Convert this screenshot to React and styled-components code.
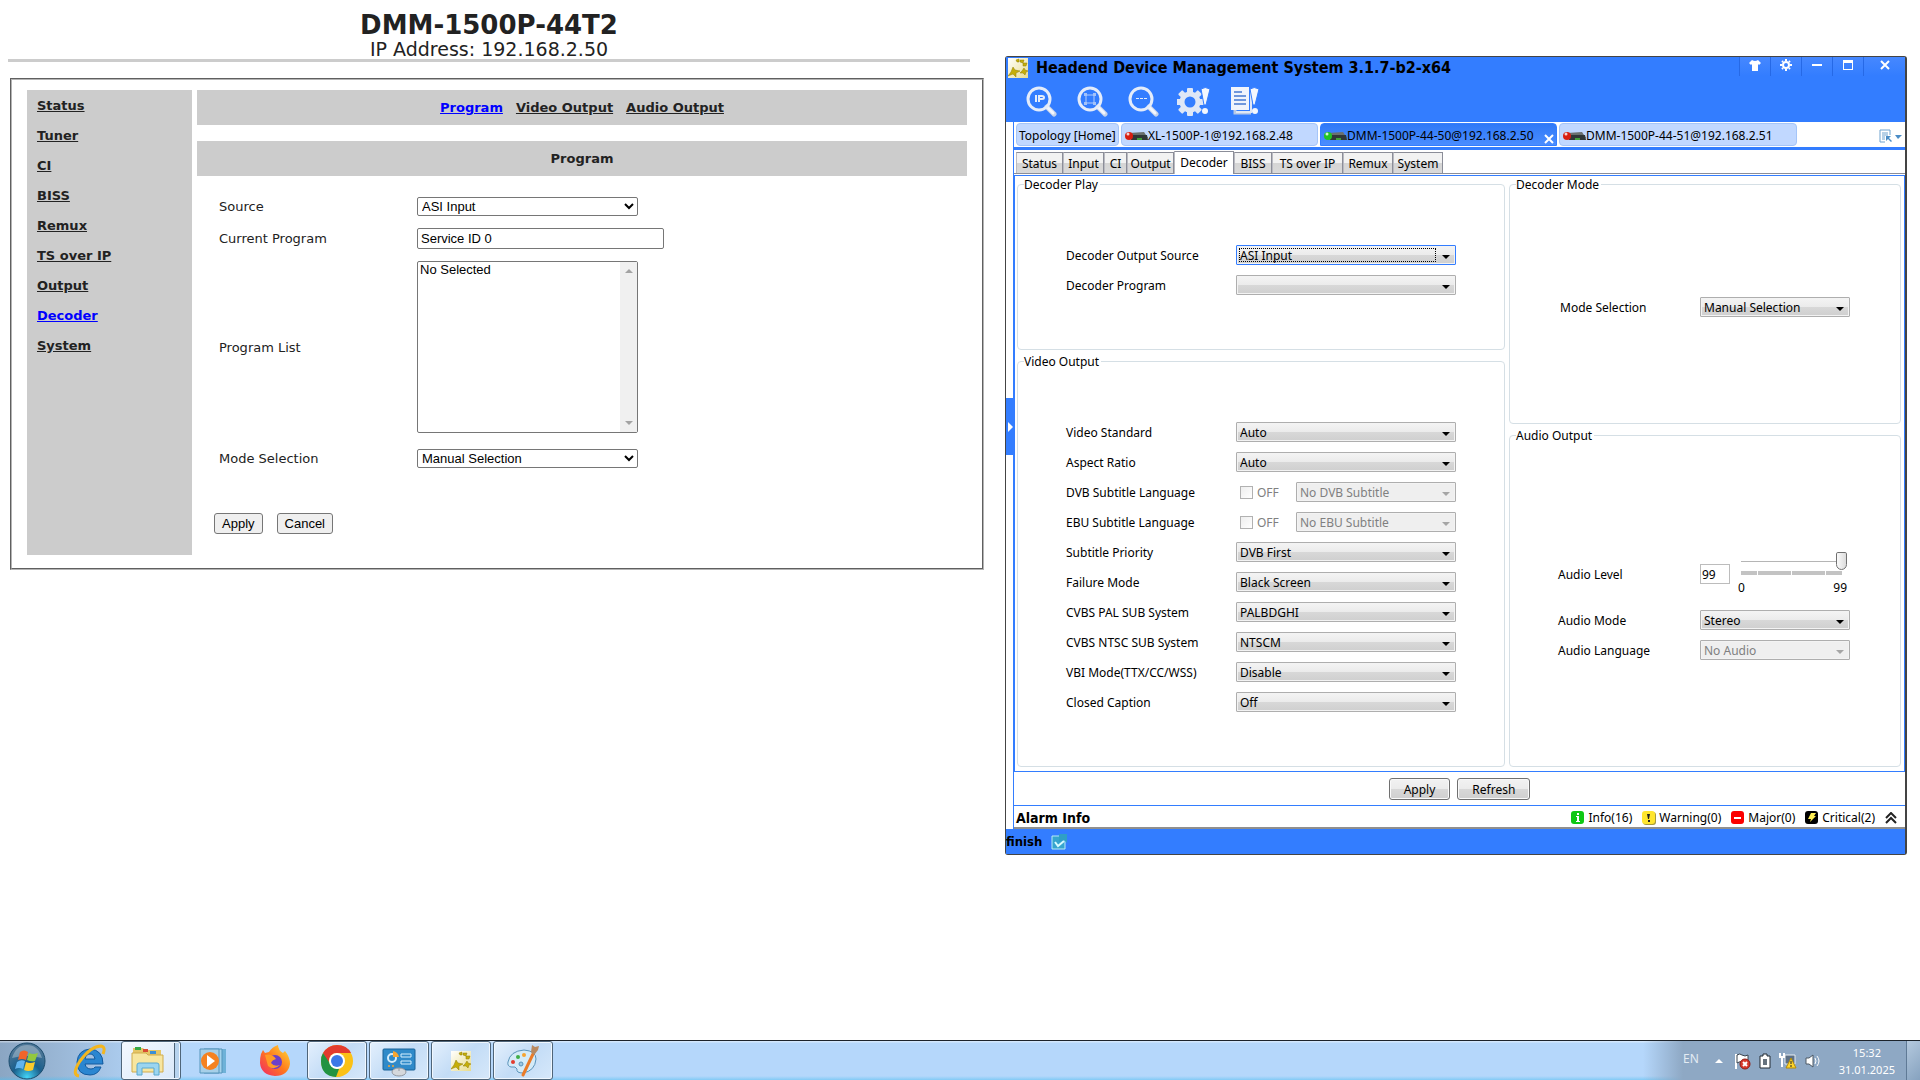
import React from 'react'
import styled, { createGlobalStyle, css } from "styled-components";
import { useState } from 'react';

const menuLinks = ["Status", "Tuner", "CI", "BISS", "Remux", "TS over IP", "Output", "Decoder", "System"];
const pageLinks = ["Program", "Video Output", "Audio Output"];

const deviceTabs = [
  { name: "XL-1500P-1@192.168.2.48", width: 197, led: "#d81e10" },
  { name: "DMM-1500P-44-50@192.168.2.50", width: 237, led: "#1fc424" },
  { name: "DMM-1500P-44-51@192.168.2.51", width: 238, led: "#d81e10" },
];

const deviceSections = [
  { name: "Status", width: 47 },
  { name: "Input", width: 41 },
  { name: "CI", width: 23 },
  { name: "Output", width: 47 },
  { name: "Decoder", width: 60 },
  { name: "BISS", width: 38 },
  { name: "TS over IP", width: 71 },
  { name: "Remux", width: 50 },
  { name: "System", width: 50 },
];

const videoRows = [
  { label: "Video Standard", value: "Auto" },
  { label: "Aspect Ratio", value: "Auto" },
  { label: "DVB Subtitle Language", value: "No DVB Subtitle", toggle: true },
  { label: "EBU Subtitle Language", value: "No EBU Subtitle", toggle: true },
  { label: "Subtitle Priority", value: "DVB First" },
  { label: "Failure Mode", value: "Black Screen" },
  { label: "CVBS PAL SUB System", value: "PALBDGHI" },
  { label: "CVBS NTSC SUB System", value: "NTSCM" },
  { label: "VBI Mode(TTX/CC/WSS)", value: "Disable" },
  { label: "Closed Caption", value: "Off" },
];

/* ---------- icons ---------- */

const Lens = ({ children }) => (
  <svg width="32" height="32" viewBox="0 0 32 32" fill="none">
    <path d="M22 22 L29 29" stroke="#c6d3ea" strokeWidth="5" strokeLinecap="round" />
    <path d="M22 22 L28 28" stroke="#f2f6fd" strokeWidth="3" strokeLinecap="round" />
    <circle cx="14" cy="14" r="11" stroke="#e4ecfa" strokeWidth="3" />
    {children}
  </svg>
);

const IpSearchIcon = () => (
  <Lens>
    <path d="M11 10 V17 M14 17 V11 H17 Q19 11 19 12.500 Q19 14 17 14 H14" stroke="#e4ecfa" strokeWidth="2" />
  </Lens>
);

const FrameSearchIcon = () => (
  <Lens>
    <path d="M10 10 H18 V18 H10 Z" stroke="#b4cefb" />
    <path d="M8 8 H11 V11 H8 Z M17 8 H20 V11 H17 Z M8 17 H11 V20 H8 Z M17 17 H20 V20 H17 Z" fill="#a3c2f9" />
  </Lens>
);

const DotsSearchIcon = () => (
  <Lens>
    <path d="M9 13.500 H12 M13 13.500 H16 M17 13.500 H20" stroke="#e4ecfa" strokeWidth="1" />
  </Lens>
);

const teeth = [0, 45, 90, 135, 180, 225, 270, 315];

const GearAlertIcon = () => (
  <svg width="34" height="32" viewBox="0 0 34 32" fill="none">
    <circle cx="13" cy="17" r="8" stroke="#dfe7f6" strokeWidth="5" />
    {teeth.map((a) => (
      <rect key={a} x="10" y="3" width="6" height="6" rx="1" fill="#dfe7f6" transform={`rotate(${a} 13 17)`} />
    ))}
    <path d="M24 4 Q28 1 33 4 L29 20 H27 Z" fill="#f4f7fd" stroke="#337dff" />
    <circle cx="28" cy="26" r="3" fill="#f4f7fd" />
  </svg>
);

const LogAlertIcon = () => (
  <svg width="30" height="32" viewBox="0 0 30 32" fill="none">
    <path d="M5 7 V28 H21" stroke="#b9c9e6" strokeWidth="3" />
    <path d="M1 2 H19 V25 H1 Z" fill="#f0f4fc" />
    <path d="M4 7 H12 M4 11 H16 M4 15 H16 M4 19 H16" stroke="#6f97dc" strokeWidth="2" />
    <path d="M21 6 V27 H6" stroke="#dfe7f5" strokeWidth="2" />
    <path d="M20 4 Q24 1 29 4 L25 20 H23 Z" fill="#f4f7fd" stroke="#337dff" />
    <circle cx="25" cy="26" r="3" fill="#f4f7fd" />
  </svg>
);

const StarsLogo = ({ size = 20 }) => (
  <svg width={size} height={size} viewBox="0 0 20 20">
    <defs>
      <linearGradient id="logoBg" x1="0" y1="0" x2="1" y2="1">
        <stop offset="0" stopColor="#ffffff" />
        <stop offset="1" stopColor="#e8dc8c" />
      </linearGradient>
    </defs>
    <rect width="20" height="20" fill="url(#logoBg)" />
    <g fill="#c6ae08" stroke="#8f7d08" strokeWidth=".5">
      <path d="M5 9 L7 12 L12 13 L8 15 L8 19 L5 16 L0 18 L3 14 Z" />
      <path d="M16 10 L17 12 L20 13 L18 14 L17 17 L15 15 L12 15 L14 13 Z" />
      <path d="M15 5 L19 5 L18 8 L15 8 Z" />
      <path d="M12 2 L16 2 L15 5 L12 4 Z" />
      <path d="M8 2 L11 1 L11 4 L9 4 Z" />
    </g>
  </svg>
);

const DeviceIcon = ({ led }) => (
  <svg width="24" height="14" viewBox="0 0 24 14">
    <path d="M5 4 L20 3 L24 9 H6 Z" fill="#6a706f" />
    <path d="M6 6 H23 L24 11 H7 Z" fill="#303738" />
    <path d="M13 9 H18 V11 H13 Z" fill="#41a13b" />
    <circle cx="5" cy="7" r="4" fill={led} />
    <circle cx="4" cy="5" r="1.500" fill="#ffffff" opacity=".8" />
  </svg>
);

const ShirtIcon = () => (
  <svg width="12" height="11" viewBox="0 0 12 11"><path d="M3 0 Q6 2 9 0 L12 3 L10 5 L9 4 V11 H3 V4 L2 5 L0 3 Z" fill="#fff" /></svg>
);
const CogIcon = () => (
  <svg width="12" height="12" viewBox="0 0 12 12" fill="none">
    <circle cx="6" cy="6" r="3" stroke="#fff" strokeWidth="2" />
    <path d="M6 0 V2 M6 10 V12 M0 6 H2 M10 6 H12 M2 2 L3 3 M9 9 L10 10 M10 2 L9 3 M3 9 L2 10" stroke="#fff" strokeWidth="2" />
  </svg>
);
const MinIcon = () => (
  <svg width="10" height="10" viewBox="0 0 10 10"><path d="M0 4 H10 V6 H0 Z" fill="#fff" /></svg>
);
const MaxIcon = () => (
  <svg width="10" height="10" viewBox="0 0 10 10" fill="#fff"><path d="M0 0 H10 V10 H0 Z M1 3 V9 H9 V3 Z" fillRule="evenodd" /></svg>
);
const CloseIcon = ({ size = 10 }) => (
  <svg width={size} height={size} viewBox="0 0 10 10"><path d="M1 1 L9 9 M9 1 L1 9" stroke="#fff" strokeWidth="2" /></svg>
);

const TabListIcon = () => (
  <svg width="24" height="14" viewBox="0 0 24 14" fill="none">
    <path d="M6 13 H1 V1 H11 V6 M3 4 H9 M3 6 H9 M3 8 H6 M3 10 H6" stroke="#6fa3cf" />
    <path d="M7 7 H12 L10 9 L13 12 L12 13 L9 10 L7 12 Z" fill="#4b8dc6" />
    <path d="M16 6 H23 L19 10 Z" fill="#4b8dc6" />
  </svg>
);

const FinishIcon = () => (
  <svg width="16" height="16" viewBox="0 0 16 16" fill="none">
    <path d="M1 2 H14 V15 H1 Z" fill="#36a5cf" stroke="#b8ecf4" />
    <path d="M8 0 H16 V9 L13 6 L8 8 Z" fill="#2f9fc6" />
    <path d="M4 8 L7 12 L13 7" stroke="#d7fbff" strokeWidth="2" />
  </svg>
);

const InfoIcon = () => (
  <svg width="14" height="14" viewBox="0 0 14 14">
    <rect width="13" height="13" rx="3" fill="#0fc814" />
    <path d="M6 2 H8 V4 H6 Z M5 5 H8 V10 H9 V11 H5 V10 H6 V6 H5 Z" fill="#fff" />
  </svg>
);
const WarningIcon = () => (
  <svg width="14" height="14" viewBox="0 0 14 14">
    <rect x="1" y="1" width="13" height="13" rx="3" fill="#a79a3c" />
    <rect width="13" height="13" rx="3" fill="#ffe52e" />
    <path d="M5 3 H8 L7 8 H6 Z M6 9 H8 V11 H6 Z" fill="#222" />
  </svg>
);
const MajorIcon = () => (
  <svg width="14" height="14" viewBox="0 0 14 14">
    <rect width="13" height="13" rx="3" fill="#fb0000" />
    <path d="M3 6 H10 V8 H3 Z" fill="#fff" />
  </svg>
);
const CriticalIcon = () => (
  <svg width="14" height="14" viewBox="0 0 14 14">
    <rect width="13" height="13" rx="3" fill="#000" />
    <path d="M6 2 H11 L9 5 H11 L5 11 L6 8 H3 Z" fill="#ffee55" />
  </svg>
);
const ChevronsIcon = () => (
  <svg width="12" height="12" viewBox="0 0 12 12" fill="none">
    <path d="M1 6 L6 1 L11 6 M1 11 L6 6 L11 11" stroke="#222" strokeWidth="2" />
  </svg>
);

/* taskbar icons */
const StartIcon = () => (
  <svg width="38" height="38" viewBox="0 0 38 38">
    <defs>
      <radialGradient id="orb" cx=".5" cy=".95" r=".8">
        <stop offset="0" stopColor="#43d5f7" />
        <stop offset=".5" stopColor="#1a5f8c" />
        <stop offset="1" stopColor="#4b7596" />
      </radialGradient>
    </defs>
    <circle cx="19" cy="19" r="18" fill="url(#orb)" stroke="#1d4d6e" />
    <path d="M4 16 Q8 3 19 3 Q30 3 34 16 Q19 12 4 16 Z" fill="#fff" opacity=".3" />
    <path d="M12 10 Q16 7 20 10 L18 18 Q14 16 10 18 Z" fill="#f0642a" />
    <path d="M21 11 Q25 13 30 11 L27 19 Q23 20 19 18 Z" fill="#93c83f" />
    <path d="M9 20 Q13 17 17 19 L15 27 Q11 25 7 27 Z" fill="#62b4ee" />
    <path d="M18 20 Q22 22 27 20 L25 28 Q20 30 16 28 Z" fill="#fccb2c" />
  </svg>
);
const IeIcon = () => (
  <svg width="34" height="34" viewBox="0 0 34 34" fill="none">
    <path d="M29 23 Q26 31 18 31 Q5 31 5 18 Q6 6 18 5 Q31 6 31 20 H13 Q14 25 19 25 Q22 25 23 23 Z M13 15 H23 Q22 10 18 10 Q14 10 13 15 Z" fill="#2a86d1" stroke="#125a9e" fillRule="evenodd" />
    <path d="M7 32 Q-1 31 8 17 Q19 2 29 2 Q34 3 31 10" stroke="#f3b61f" strokeWidth="3" />
  </svg>
);
const ExplorerIcon = () => (
  <svg width="34" height="32" viewBox="0 0 34 32">
    <path d="M2 3 H12 L14 5 H30 V26 H2 Z" fill="#e5c667" />
    <path d="M4 2 H10 V5 H4 Z" fill="#36a845" />
    <path d="M12 4 H17 V7 H12 Z" fill="#d94b32" />
    <path d="M19 6 H25 V9 H19 Z" fill="#3a8fd6" />
    <path d="M1 8 H15 L17 10 H32 V27 H1 Z" fill="#f7e6a0" stroke="#d0ab4d" />
    <path d="M6 30 V20 Q6 18 8 18 H26 Q28 18 28 20 V30 H23 V23 H11 V30 Z" fill="#9bd5f0" stroke="#5aa8cf" />
  </svg>
);
const PlayerIcon = () => (
  <svg width="30" height="28" viewBox="0 0 30 28">
    <path d="M10 2 H28 V26 H10 Z" fill="#6fb2d8" />
    <path d="M6 2 H24 V26 H6 Z" fill="#a6d3ec" stroke="#5594bb" />
    <path d="M2 2 H21 V26 H2 Z" fill="#a6cfe8" stroke="#5594bb" />
    <circle cx="12" cy="14" r="9" fill="#f58220" />
    <path d="M9 8 L17 14 L9 20 Z" fill="#fff" />
  </svg>
);
const FirefoxIcon = () => (
  <svg width="32" height="32" viewBox="0 0 32 32">
    <defs>
      <linearGradient id="fox" x1="1" y1="0" x2="0" y2="1">
        <stop offset="0" stopColor="#ffe23c" />
        <stop offset=".5" stopColor="#ff7a1c" />
        <stop offset="1" stopColor="#f0246b" />
      </linearGradient>
    </defs>
    <path d="M2 9 L4 5 L6 8 L10 7 Q13 2 19 0 Q19 5 24 8 L26 6 Q31 12 31 19 Q29 31 16 31 Q2 30 1 18 Q1 12 2 9 Z" fill="url(#fox)" />
    <circle cx="16" cy="17" r="7" fill="#6b3fc9" />
    <path d="M6 10 Q13 8 17 14 Q13 15 12 18 Q15 22 21 20 Q15 26 9 21 Z" fill="#ff9a26" />
  </svg>
);
const ChromeIcon = () => (
  <svg width="34" height="34" viewBox="0 0 34 34">
    <circle cx="17" cy="17" r="16" fill="#fbc116" />
    <path d="M3 9 Q8 1 17 1 Q27 1 31 9 H17 Q12 9 10 13 L8 19 Z" fill="#e33b2e" />
    <path d="M3 9 L11 21 Q14 25 19 25 L16 33 Q1 32 1 17 Q1 12 3 9 Z" fill="#229342" />
    <circle cx="17" cy="17" r="8" fill="#fff" />
    <circle cx="17" cy="17" r="6" fill="#3b78e7" />
  </svg>
);
const PanelIcon = () => (
  <svg width="34" height="32" viewBox="0 0 34 32" fill="none">
    <rect x="1" y="4" width="32" height="21" rx="1" fill="#2f8ac9" stroke="#1b6398" />
    <circle cx="10" cy="13" r="4" stroke="#d5edfb" strokeWidth="2" />
    <path d="M11 12 V6 Q16 7 17 12 Z" fill="#f6a531" />
    <path d="M19 9 H29 V12 H19 Z M19 16 H29 V19 H19 Z" stroke="#d5f0ff" />
    <circle cx="7" cy="21" r="1" fill="#f6a531" />
    <circle cx="11" cy="21" r="1" fill="#f6a531" />
    <ellipse cx="17" cy="27" rx="7" ry="4" fill="#d5d8dc" stroke="#9298a0" />
    <path d="M17 23 V26" stroke="#9298a0" />
  </svg>
);
const PaintIcon = () => (
  <svg width="34" height="34" viewBox="0 0 34 34" fill="none">
    <path d="M2 18 Q4 7 18 6 Q30 7 30 15 Q29 27 17 29 Q10 29 11 25 Q10 22 5 23 Q1 22 2 18 Z" fill="#d4ebf8" stroke="#5a93ba" />
    <circle cx="7" cy="18" r="2" fill="#e33b2e" />
    <circle cx="12" cy="13" r="2" fill="#3fae49" />
    <circle cx="18" cy="11" r="2" fill="#f6a531" />
    <circle cx="15" cy="20" r="2" fill="#9cc8e4" stroke="#5a93ba" />
    <path d="M27 10 L17 31" stroke="#ea7b28" strokeWidth="3" strokeLinecap="round" />
    <path d="M25 8 L26 1 L29 3 L33 2 L32 6 L28 11 Z" fill="#b9895f" />
  </svg>
);

const FlagIcon = () => (
  <svg width="18" height="18" viewBox="0 0 18 18" fill="none">
    <path d="M3 2 V17" stroke="#fff" strokeWidth="2" />
    <path d="M4 3 Q7 1 9 3 Q12 5 15 3 V10 Q11 12 9 10 Q7 9 4 11 Z" fill="#fff" stroke="#39434d" />
    <circle cx="12" cy="12" r="5" fill="#d8392c" stroke="#8f1c14" />
    <path d="M10 10 L14 14 M14 10 L10 14" stroke="#fff" strokeWidth="2" />
  </svg>
);
const BatteryIcon = () => (
  <svg width="12" height="16" viewBox="0 0 12 16" fill="none">
    <path d="M4 1 H8 V3 H11 V15 H1 V3 H4 Z" fill="#fff" stroke="#222b33" />
    <path d="M4 6 H8 V12 H4 Z" fill="#66727d" />
  </svg>
);
const NetworkIcon = () => (
  <svg width="18" height="17" viewBox="0 0 18 17" fill="none">
    <path d="M6 3 H16 V12 H6 Z" fill="#5d7085" stroke="#e8eef4" />
    <path d="M1 1 V5 H5 V1 M3 5 V15" stroke="#fff" strokeWidth="2" />
    <path d="M12 6 L17 16 H7 Z" fill="#ffd52b" stroke="#b48a06" />
    <path d="M12 9 V12 M12 13 V15" stroke="#222" strokeWidth="1" />
  </svg>
);
const SpeakerIcon = () => (
  <svg width="16" height="16" viewBox="0 0 16 16" fill="none">
    <path d="M1 5 H4 L8 2 V14 L4 11 H1 Z" fill="#fff" stroke="#4c5864" />
    <path d="M10 5 Q12 8 10 11 M12 3 Q16 8 12 13" stroke="#fff" />
  </svg>
);

/* ---------- controls ---------- */

const SwingSelect = ({ id, value, disabled, focused, ...rest }) => (
  <SelectBox $disabled={disabled} $focused={focused}>
    <SelectField id={id} disabled={disabled} $focused={focused} defaultValue={value} {...rest}>
      <option>{value}</option>
    </SelectField>
  </SelectBox>
);

const WebPage = () => {
  const [program, setProgram] = useState("Service ID 0");

  return (
    <Page>
      <PageHeader>
        <h1>DMM-1500P-44T2</h1>
        <p>IP Address: 192.168.2.50</p>
      </PageHeader>
      <PageBox>
        <SideMenu>
          {menuLinks.map((name) => (
            <PageLink href="#" key={name} $active={name === "Decoder"}>{name}</PageLink>
          ))}
        </SideMenu>
        <main>
          <TopMenu>
            {pageLinks.map((name) => (
              <PageLink href="#" key={name} $active={name === "Program"}>{name}</PageLink>
            ))}
          </TopMenu>
          <SectionTitle>Program</SectionTitle>
          <form onSubmit={(e) => e.preventDefault()}>
            <FormGrid>
              <label htmlFor="source">Source</label>
              <PageSelect id="source"><option>ASI Input</option></PageSelect>

              <label htmlFor="current">Current Program</label>
              <PageInput id="current" value={program} onChange={(e) => setProgram(e.target.value)} />

              <label htmlFor="programs">Program List</label>
              <ListBox>
                <ProgramList id="programs" size="10"><option>No Selected</option></ProgramList>
                <ScrollTrack aria-hidden="true" />
              </ListBox>

              <label htmlFor="mode">Mode Selection</label>
              <PageSelect id="mode"><option>Manual Selection</option></PageSelect>
            </FormGrid>
            <PageButtons>
              <PageButton type="submit">Apply</PageButton>
              <PageButton type="reset">Cancel</PageButton>
            </PageButtons>
          </form>
        </main>
      </PageBox>
    </Page>
  );
};

const DecoderPanel = () => {
  const [level, setLevel] = useState(99);

  return (
    <Panel>
      <PanelColumn>
        <Group>
          <legend>Decoder Play</legend>
          <Rows>
            <Row>
              <label htmlFor="outSource">Decoder Output Source</label>
              <SwingSelect id="outSource" value="ASI Input" focused />
            </Row>
            <Row>
              <label htmlFor="decProgram">Decoder Program</label>
              <SwingSelect id="decProgram" value="" />
            </Row>
          </Rows>
        </Group>
        <Group>
          <legend>Video Output</legend>
          <Rows>
            {videoRows.map(({ label, value, toggle }, i) => (
              <Row key={label}>
                <label htmlFor={`video${i}`}>{label}</label>
                {toggle ? (
                  <ToggleCell>
                    <CheckLabel>
                      <CheckBox type="checkbox" disabled />
                      OFF
                    </CheckLabel>
                    <SwingSelect id={`video${i}`} value={value} disabled />
                  </ToggleCell>
                ) : (
                  <SwingSelect id={`video${i}`} value={value} />
                )}
              </Row>
            ))}
          </Rows>
        </Group>
      </PanelColumn>
      <PanelColumn>
        <Group>
          <legend>Decoder Mode</legend>
          <Rows $pad="105px 44px 106px 44px">
            <Row $label={140}>
              <label htmlFor="decMode">Mode Selection</label>
              <SwingSelect id="decMode" value="Manual Selection" />
            </Row>
          </Rows>
        </Group>
        <Group>
          <legend>Audio Output</legend>
          <Rows $pad="109px 44px 106px 42px">
            <LevelRow $label={142}>
              <label htmlFor="level">Audio Level</label>
              <LevelCell>
                <LevelInput id="level" value={level} onChange={(e) => setLevel(e.target.value)} />
                <LevelSlider>
                  <Slider
                    type="range"
                    min="0"
                    max="99"
                    aria-label="Audio Level"
                    value={level}
                    onChange={(e) => setLevel(e.target.value)}
                  />
                  <Ticks><i /><i /><i /><i /></Ticks>
                  <TickLabels><span>0</span><span>99</span></TickLabels>
                </LevelSlider>
              </LevelCell>
            </LevelRow>
            <Row $label={142}>
              <label htmlFor="audioMode">Audio Mode</label>
              <SwingSelect id="audioMode" value="Stereo" />
            </Row>
            <Row $label={142}>
              <label htmlFor="audioLang">Audio Language</label>
              <SwingSelect id="audioLang" value="No Audio" disabled />
            </Row>
          </Rows>
        </Group>
      </PanelColumn>
    </Panel>
  );
};

const ManagerWindow = () => (
  <Window>
    <WindowHead>
      <TitleBar>
        <StarsLogo size={20} />
        <h2>Headend Device Management System 3.1.7-b2-x64</h2>
        <WindowButton aria-label="Skin"><ShirtIcon /></WindowButton>
        <WindowButton aria-label="Settings"><CogIcon /></WindowButton>
        <WindowButton aria-label="Minimize"><MinIcon /></WindowButton>
        <WindowButton aria-label="Maximize"><MaxIcon /></WindowButton>
        <WindowButton aria-label="Close" $wide><CloseIcon /></WindowButton>
      </TitleBar>
      <Toolbar>
        <ToolButton aria-label="Search IP"><IpSearchIcon /></ToolButton>
        <ToolButton aria-label="Search area"><FrameSearchIcon /></ToolButton>
        <ToolButton aria-label="Search more"><DotsSearchIcon /></ToolButton>
        <ToolButton aria-label="Alarm settings"><GearAlertIcon /></ToolButton>
        <ToolButton aria-label="Alarm log"><LogAlertIcon /></ToolButton>
      </Toolbar>
    </WindowHead>
    <WindowBody>
      <SideStrip>
        <ExpandHandle aria-label="Expand" />
      </SideStrip>
      <Content>
        <DeviceTabs>
          <DeviceTab $width={103}>Topology [Home]</DeviceTab>
          {deviceTabs.map(({ name, width, led }, i) => (
            <DeviceTab key={name} $width={width} $active={i === 1}>
              <DeviceIcon led={led} />
              <span>{name}</span>
              {i === 1 && <CloseIcon size={10} />}
            </DeviceTab>
          ))}
          <TabListButton aria-label="Tab list"><TabListIcon /></TabListButton>
        </DeviceTabs>
        <SectionTabs>
          {deviceSections.map(({ name, width }) => (
            <SectionTab key={name} $width={width} $active={name === "Decoder"}>{name}</SectionTab>
          ))}
        </SectionTabs>
        <DecoderPanel />
        <ActionBar>
          <SwingButton>Apply</SwingButton>
          <SwingButton>Refresh</SwingButton>
        </ActionBar>
        <AlarmBar>
          <strong>Alarm Info</strong>
          <Alarm><InfoIcon />Info(16)</Alarm>
          <Alarm><WarningIcon />Warning(0)</Alarm>
          <Alarm><MajorIcon />Major(0)</Alarm>
          <Alarm><CriticalIcon />Critical(2)</Alarm>
          <PlainButton aria-label="Show alarms"><ChevronsIcon /></PlainButton>
        </AlarmBar>
      </Content>
    </WindowBody>
    <StatusBar>finish <FinishIcon /></StatusBar>
  </Window>
);

const App = () => {
  return (
    <Desktop>
      <GlobalStyle />
      <Workspace>
        <WebPage />
        <ManagerWindow />
      </Workspace>
      <Taskbar>
        <StartButton aria-label="Start"><StartIcon /></StartButton>
        <TaskButton aria-label="Internet Explorer"><IeIcon /></TaskButton>
        <TaskButton aria-label="Explorer" $open $stacked><ExplorerIcon /></TaskButton>
        <TaskButton aria-label="Media Player"><PlayerIcon /></TaskButton>
        <TaskButton aria-label="Firefox"><FirefoxIcon /></TaskButton>
        <TaskButton aria-label="Chrome" $open><ChromeIcon /></TaskButton>
        <TaskButton aria-label="Control Panel" $open><PanelIcon /></TaskButton>
        <TaskButton aria-label="Headend Manager" $open><StarsLogo /></TaskButton>
        <TaskButton aria-label="Paint" $open><PaintIcon /></TaskButton>
        <Tray>
          <Language>EN</Language>
          <TrayArrow />
          <FlagIcon />
          <BatteryIcon />
          <NetworkIcon />
          <SpeakerIcon />
          <Clock>
            <span>15:32</span>
            <span>31.01.2025</span>
          </Clock>
          <ShowDesktop aria-label="Show desktop" />
        </Tray>
      </Taskbar>
    </Desktop>
  );
}

const GlobalStyle = createGlobalStyle`
  * {
    box-sizing: border-box;
  }
  body {
    margin: 0;
    background: #fff;
  }
  h1, h2, p {
    margin: 0;
  }
  svg {
    flex: none;
  }
`;

const Desktop = styled.div`
  display: flex;
  flex-direction: column;
  min-height: 100vh;
`;

const Workspace = styled.div`
  flex: 1;
  display: grid;
  grid-template-columns: minmax(0, 984fr) minmax(0, 936fr);
  align-items: start;
`;

/* web page on the left */

const Page = styled.div`
  font: 13px "DejaVu Sans", Verdana, sans-serif;
  color: #222;
`;

const PageHeader = styled.header`
  margin: 0 14px 16px 8px;
  padding-top: 11px;
  border-bottom: 3px solid #ccc;
  text-align: center;
  h1 {
    font-size: 26px;
    line-height: 29px;
  }
  p {
    font-size: 19px;
    line-height: 19px;
  }
`;

const PageBox = styled.div`
  display: grid;
  grid-template-columns: 165px minmax(0, 1fr);
  gap: 5px;
  margin-left: 10px;
  padding: 10px 15px 13px;
  border: 2px groove #b4b4b4;
`;

const SideMenu = styled.nav`
  display: flex;
  flex-direction: column;
  align-items: flex-start;
  padding: 1px 0 0 10px;
  background: #ccc;
  line-height: 30px;
`;

const PageLink = styled.a`
  font-weight: bold;
  color: ${({ $active }) => ($active ? "#0000ff" : "#222")};
`;

const TopMenu = styled.nav`
  display: flex;
  justify-content: center;
  gap: 13px;
  background: #ccc;
  line-height: 35px;
`;

const SectionTitle = styled.div`
  margin-top: 16px;
  background: #ccc;
  font-weight: bold;
  line-height: 35px;
  text-align: center;
`;

const FormGrid = styled.div`
  display: grid;
  grid-template-columns: 198px minmax(0, 1fr);
  grid-template-rows: 19px 21px 172px 27px;
  row-gap: 12px;
  align-items: center;
  justify-items: start;
  padding: 21px 0 0 22px;
`;

const pageFont = css`
  margin: 0;
  color: #000;
  font: 13px "Liberation Sans", Arial, sans-serif;
`;

const pageControl = css`
  ${pageFont}
  border: 1px solid #767676;
  border-radius: 2px;
  background-color: #fff;
`;

const PageSelect = styled.select`
  ${pageControl}
  width: 221px;
  height: 19px;
`;

const PageInput = styled.input`
  ${pageControl}
  width: 247px;
  height: 21px;
  padding: 1px 3px;
`;

const ListBox = styled.div`
  ${pageControl}
  display: flex;
  width: 221px;
  height: 172px;
`;

const ProgramList = styled.select`
  ${pageFont}
  flex: 1;
  height: 100%;
  border: 0;
  background: none;
  option {
    padding: 0 2px;
  }
`;

const ScrollTrack = styled.div`
  display: flex;
  flex-direction: column;
  align-items: center;
  justify-content: space-between;
  width: 17px;
  padding: 7px 0;
  background: #f0f0f0;
  &::before, &::after {
    content: "";
    border: solid transparent;
    border-width: 0 4px 4px;
    border-bottom-color: #a3a3a3;
  }
  &::after {
    border-width: 4px 4px 0;
    border-top-color: #a3a3a3;
  }
`;

const PageButtons = styled.div`
  display: flex;
  gap: 14px;
  padding: 41px 0 21px 17px;
`;

const PageButton = styled.button`
  ${pageControl}
  height: 21px;
  padding: 0 7px;
  border-radius: 3px;
  background: #efefef;
`;

/* desktop application window */

const blue = "#337dff";
const boldFont = '"DejaVu Sans Condensed", Tahoma, sans-serif';

const Window = styled.section`
  margin: 56px 13px 0 21px;
  border: solid #444;
  border-width: 1px 2px 1px 1px;
  border-radius: 3px;
  background: #fff;
  color: #000;
  font: 12px "Noto Sans", Tahoma, sans-serif;
  button, input, select {
    font: inherit;
    color: inherit;
  }
`;

const PlainButton = styled.button`
  display: flex;
  align-items: center;
  justify-content: center;
  padding: 0;
  border: 0;
  background: none;
`;

const WindowHead = styled.header`
  background: ${blue};
`;

const TitleBar = styled.div`
  display: flex;
  align-items: center;
  height: 22px;
  padding-left: 2px;
  h2 {
    flex: 1;
    padding-left: 8px;
    font: bold 16px/20px ${boldFont};
    white-space: nowrap;
  }
`;

const WindowButton = styled(PlainButton)`
  align-self: flex-start;
  width: ${({ $wide }) => ($wide ? 42 : 31)}px;
  height: 19px;
  padding-bottom: 3px;
  border-left: 1px solid #2669e6;
  background: linear-gradient(#4688ff, ${blue});
`;

const Toolbar = styled.div`
  display: flex;
  height: 43px;
  padding-left: 9px;
`;

const ToolButton = styled(PlainButton)`
  width: 51px;
`;

const WindowBody = styled.div`
  display: flex;
`;

const SideStrip = styled.div`
  width: 8px;
  border-right: 1px solid ${blue};
`;

const ExpandHandle = styled(PlainButton)`
  width: 8px;
  height: 57px;
  margin-top: 276px;
  background: ${blue};
  &::after {
    content: "";
    border: solid transparent;
    border-width: 5px 0 5px 5px;
    border-left-color: #fff;
  }
`;

const Content = styled.div`
  flex: 1;
  min-width: 0;
`;

const DeviceTabs = styled.div`
  display: flex;
  gap: 2px;
  padding: 1px 2px;
  border-bottom: 3px solid ${blue};
`;

const DeviceTab = styled.button`
  display: flex;
  align-items: center;
  flex: 0 1 ${({ $width }) => $width}px;
  height: 23px;
  padding: 2px 2px 0;
  border: 1px solid #a5c5f8;
  border-radius: 4px;
  background: #c1d8ff;
  white-space: nowrap;
  ${({ $active }) => $active && css`
    border-color: ${blue};
    border-radius: 4px 4px 0 0;
    background: linear-gradient(#2f79f7, #4a8dff);
    span {
      flex: 1;
      text-align: left;
    }
    svg:last-child {
      align-self: flex-end;
      margin-bottom: 1px;
    }
  `}
`;

const TabListButton = styled(PlainButton)`
  margin-left: auto;
  padding-top: 3px;
`;

const SectionTabs = styled.div`
  display: flex;
  align-items: flex-end;
  padding: 1px 0 0 2px;
  border-bottom: 1px solid #8b8d98;
`;

const SectionTab = styled.button`
  flex: 0 1 ${({ $width }) => $width}px;
  height: 21px;
  padding: 1px 0 0;
  border: 1px solid #8b8d98;
  border-left-color: #b9bac2;
  border-bottom: 0;
  background: linear-gradient(#f2f2f2 50%, #d5d5d5 50%, #dadada);
  white-space: nowrap;
  ${({ $active }) => $active && css`
    height: 23px;
    margin-bottom: -1px;
    padding: 0 0 2px;
    background: #fff;
  `}
`;

const Panel = styled.div`
  display: grid;
  grid-template-columns: minmax(0, 488fr) minmax(0, 392fr);
  gap: 4px;
  margin-top: 1px;
  padding: 0 3px 4px 2px;
  border: 1px solid ${blue};
`;

const PanelColumn = styled.div`
  display: flex;
  flex-direction: column;
  gap: 3px;
`;

const Group = styled.fieldset`
  min-width: 0;
  margin: 0;
  padding: 0 6px;
  border: 1px solid #d5dfe5;
  border-radius: 4px;
  legend {
    height: 16px;
    padding: 0 2px 0 0;
    line-height: 18px;
  }
`;

const Rows = styled.div`
  display: flex;
  flex-direction: column;
  gap: 10px;
  padding: ${({ $pad = "53px 42px 54px" }) => $pad};
`;

const Row = styled.div`
  display: grid;
  grid-template-columns: ${({ $label = 170 }) => $label}px minmax(0, 1fr);
  align-items: center;
  white-space: nowrap;
`;

const LevelRow = styled(Row)`
  margin-bottom: 4px;
`;

const SelectBox = styled.div`
  position: relative;
  flex: 1;
  &::after {
    content: "";
    position: absolute;
    right: 6px;
    top: 10px;
    border: solid transparent;
    border-width: 4px 4px 0;
    border-top-color: ${({ $disabled }) => ($disabled ? "#a5a5a5" : "#000")};
    pointer-events: none;
  }
  ${({ $focused }) => $focused && css`
    &::before {
      content: "";
      position: absolute;
      inset: 3px 20px 3px 3px;
      border: 1px dotted #000;
      pointer-events: none;
    }
  `}
`;

const SelectField = styled.select`
  display: block;
  width: 100%;
  height: 20px;
  padding: 0 20px 0 3px;
  appearance: none;
  border: 1px solid ${({ $focused }) => ($focused ? blue : "#aeaeae")};
  border-radius: 1px;
  background: linear-gradient(#f4f4f4, #ebebeb 50%, #d8d8d8 50%, #cfcfcf);
  box-shadow: inset 0 0 0 1px #f3f3f3;
  &:disabled {
    background: #efefef;
    color: #808080;
    opacity: 1;
  }
`;

const ToggleCell = styled.div`
  display: flex;
  align-items: center;
`;

const CheckLabel = styled.label`
  display: flex;
  align-items: center;
  gap: 4px;
  width: 60px;
  padding-left: 4px;
  color: #808080;
`;

const CheckBox = styled.input`
  appearance: none;
  width: 13px;
  height: 13px;
  margin: 0;
  border: 1px solid #b1b1b1;
  background: linear-gradient(135deg, #eee, #fff);
`;

const LevelCell = styled.div`
  display: flex;
  align-items: center;
  gap: 8px;
`;

const LevelInput = styled.input`
  width: 30px;
  height: 20px;
  padding: 0 1px;
  border: 1px solid #bcbcbc;
`;

const LevelSlider = styled.div`
  flex: 1;
  padding-right: 3px;
`;

const Slider = styled.input`
  display: block;
  width: 100%;
  height: 18px;
  margin: 0;
  appearance: none;
  background: linear-gradient(#b5b5b5, #b5b5b5) right / calc(100% - 3px) 1px no-repeat;
  &::-webkit-slider-thumb {
    appearance: none;
    width: 11px;
    height: 18px;
    border: 1px solid #707070;
    border-radius: 2px 2px 6px 6px;
    background: linear-gradient(90deg, #fafafa, #dcdcdc);
  }
`;

const Ticks = styled.div`
  display: grid;
  grid-template-columns: 1fr 2fr 2fr 1fr;
  gap: 1px;
  height: 4px;
  margin: 1px 5px 0 3px;
  i {
    background: #c3c3c3;
  }
`;

const TickLabels = styled.div`
  display: flex;
  justify-content: space-between;
  padding-top: 5px;
  line-height: 16px;
`;

const ActionBar = styled.div`
  display: flex;
  justify-content: center;
  align-items: center;
  gap: 7px;
  height: 34px;
  border-bottom: 1px solid ${blue};
`;

const SwingButton = styled.button`
  height: 22px;
  padding: 1px 14px 0;
  border: 1px solid #707070;
  border-radius: 3px;
  background: linear-gradient(#f2f2f2, #ebebeb 50%, #d8d8d8 50%, #cfcfcf);
  box-shadow: inset 0 0 0 1px #fafafa;
`;

const AlarmBar = styled.div`
  display: flex;
  align-items: center;
  gap: 10px;
  height: 23px;
  padding: 2px 8px 0 2px;
  border-bottom: 2px solid #8f8f8f;
  strong {
    flex: 1;
    font: bold 14px/20px ${boldFont};
  }
`;

const Alarm = styled.span`
  display: flex;
  align-items: center;
  gap: 3px;
`;

const StatusBar = styled.footer`
  display: flex;
  align-items: center;
  gap: 9px;
  height: 25px;
  background: ${blue};
  font: bold 13px ${boldFont};
`;

/* taskbar */

const Taskbar = styled.footer`
  display: flex;
  gap: 2px;
  height: 40px;
  border-top: 1px solid #1c232b;
  background:
    linear-gradient(rgba(255, 255, 255, .4) 1px, transparent 2px 35px, rgba(80, 190, 240, .5)),
    linear-gradient(90deg, #8ba6c3, #9ab7d6 60px, #b5d7fb 160px, #b5d7fb);
  font: 12px "Noto Sans", "Segoe UI", sans-serif;
  color: #fff;
`;

const StartButton = styled(PlainButton)`
  width: 57px;
  padding-right: 3px;
`;

const TaskButton = styled(PlainButton)`
  width: 60px;
  border-radius: 3px;
  ${({ $open }) => $open && css`
    border: 1px solid #4f6579;
    background: linear-gradient(135deg, #e4f0fd, #c3dcf6 50%, #d6e8fa);
    box-shadow: inset 0 0 0 1px #f0f7fe;
  `}
  ${({ $stacked }) => $stacked && css`
    padding-right: 6px;
    background: linear-gradient(90deg, transparent 52px, #4f6579 52px 53px, #b7d3ee 53px), linear-gradient(135deg, #f3f8fe, #d9e8f9);
  `}
`;

const Tray = styled.div`
  display: flex;
  align-items: center;
  gap: 8px;
  margin-left: auto;
  padding-left: 40px;
  background: linear-gradient(90deg, rgba(142, 168, 196, 0), #8ea8c4 40px);
`;

const Language = styled.span`
  margin: 0 8px 4px 0;
  color: #e3ebf3;
`;

const TrayArrow = styled.i`
  margin-right: 2px;
  border: solid transparent;
  border-width: 0 4px 4px;
  border-bottom-color: #fff;
`;

const Clock = styled.div`
  display: flex;
  flex-direction: column;
  align-items: center;
  margin: 0 3px 0 10px;
  font-size: 11px;
  line-height: 17px;
`;

const ShowDesktop = styled(PlainButton)`
  align-self: stretch;
  width: 14px;
  border-left: 1px solid #5f7a96;
  background: linear-gradient(135deg, #b4c9de, #86a2bf);
`;

export default App
